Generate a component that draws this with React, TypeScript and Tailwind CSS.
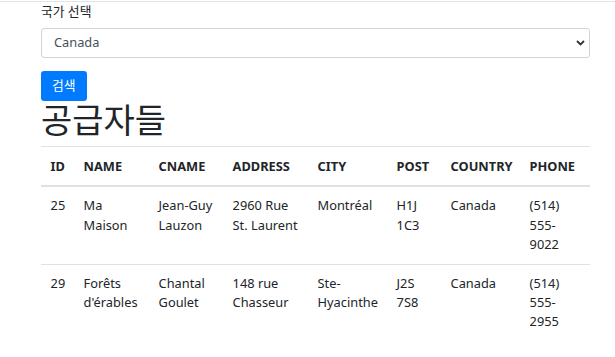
import React, { useState } from "react";

type Supplier = {
  id: number;
  name: string;
  cname: string;
  address: string;
  city: string;
  post: string;
  country: string;
  phone: string;
};

const suppliers: Supplier[] = [
  {
    id: 25,
    name: "Ma Maison",
    cname: "Jean-Guy Lauzon",
    address: "2960 Rue St. Laurent",
    city: "Montréal",
    post: "H1J 1C3",
    country: "Canada",
    phone: "(514) 555-9022",
  },
  {
    id: 29,
    name: "Forêts d'érables",
    cname: "Chantal Goulet",
    address: "148 rue Chasseur",
    city: "Ste-Hyacinthe",
    post: "J2S 7S8",
    country: "Canada",
    phone: "(514) 555-2955",
  },
];

const columns = [
  { key: "id", label: "ID", width: "w-[33px]" },
  { key: "name", label: "NAME", width: "w-[75px]" },
  { key: "cname", label: "CNAME", width: "w-[74px]" },
  { key: "address", label: "ADDRESS", width: "w-[85px]" },
  { key: "city", label: "CITY", width: "w-[79px]" },
  { key: "post", label: "POST", width: "w-[54px]" },
  { key: "country", label: "COUNTRY", width: "w-[79px]" },
  { key: "phone", label: "PHONE", width: "w-[70px]" },
];

export default function App() {
  const [country, setCountry] = useState("Canada");

  return (
    <div className="min-h-screen bg-white text-[#212529] text-[12.8px] leading-[19.2px] font-['Segoe_UI','Noto_Sans','Noto_Sans_CJK_KR',sans-serif]">
      <div className="mt-px border-t border-[#e3e3e3]" />
      <div className="px-[41px] pr-[25px]">
        <div className="mb-[12.8px]">
          <label className="mb-[6.4px] block">국가 선택</label>
          <div className="relative">
            <select
              value={country}
              onChange={(e) => setCountry(e.target.value)}
              className="block h-[30.4px] w-full appearance-none rounded-[3px] border border-[#ced4da] bg-white px-[12px] text-[12.8px] text-[#495057]"
            >
              <option>Canada</option>
              <option>USA</option>
              <option>UK</option>
            </select>
            <svg
              className="pointer-events-none absolute right-[5px] top-1/2 -translate-y-1/2"
              width="9"
              height="6"
              viewBox="0 0 9 6"
            >
              <path d="M1 1l3.5 3.5L8 1" stroke="#333" strokeWidth="1.8" fill="none" />
            </svg>
          </div>
        </div>

        <button
          type="button"
          className="h-[30.4px] rounded-[3.2px] bg-[#007bff] px-[11px] text-[12.8px] text-white"
        >
          검색
        </button>

        <h1 className="mb-[6.4px] text-[34px] leading-[38.4px] font-normal text-[#212529]">공급자들</h1>

        <table className="w-[549px] table-fixed border-collapse">
          <thead>
            <tr className="border-t border-b-2 border-t-[#dee2e6] border-b-[#dee2e6]">
              {columns.map((col) => (
                <th key={col.key} className={`${col.width} p-[9.6px] text-left align-bottom font-bold`}>
                  {col.label}
                </th>
              ))}
            </tr>
          </thead>
          <tbody>
            {suppliers.map((s, i) => (
              <tr key={s.id} className={i > 0 ? "border-t border-[#dee2e6]" : ""}>
                <td className="px-[9.6px] pt-[9px] pb-[9.6px] align-top">{s.id}</td>
                <td className="px-[9.6px] pt-[9px] pb-[9.6px] align-top">{s.name}</td>
                <td className="px-[9.6px] pt-[9px] pb-[9.6px] align-top">{s.cname}</td>
                <td className="px-[9.6px] pt-[9px] pb-[9.6px] align-top">{s.address}</td>
                <td className="px-[9.6px] pt-[9px] pb-[9.6px] align-top">{s.city}</td>
                <td className="px-[9.6px] pt-[9px] pb-[9.6px] align-top">{s.post}</td>
                <td className="px-[9.6px] pt-[9px] pb-[9.6px] align-top">{s.country}</td>
                <td className="px-[9.6px] pt-[9px] pb-[9.6px] align-top">{s.phone}</td>
              </tr>
            ))}
          </tbody>
        </table>
      </div>
    </div>
  );
}
